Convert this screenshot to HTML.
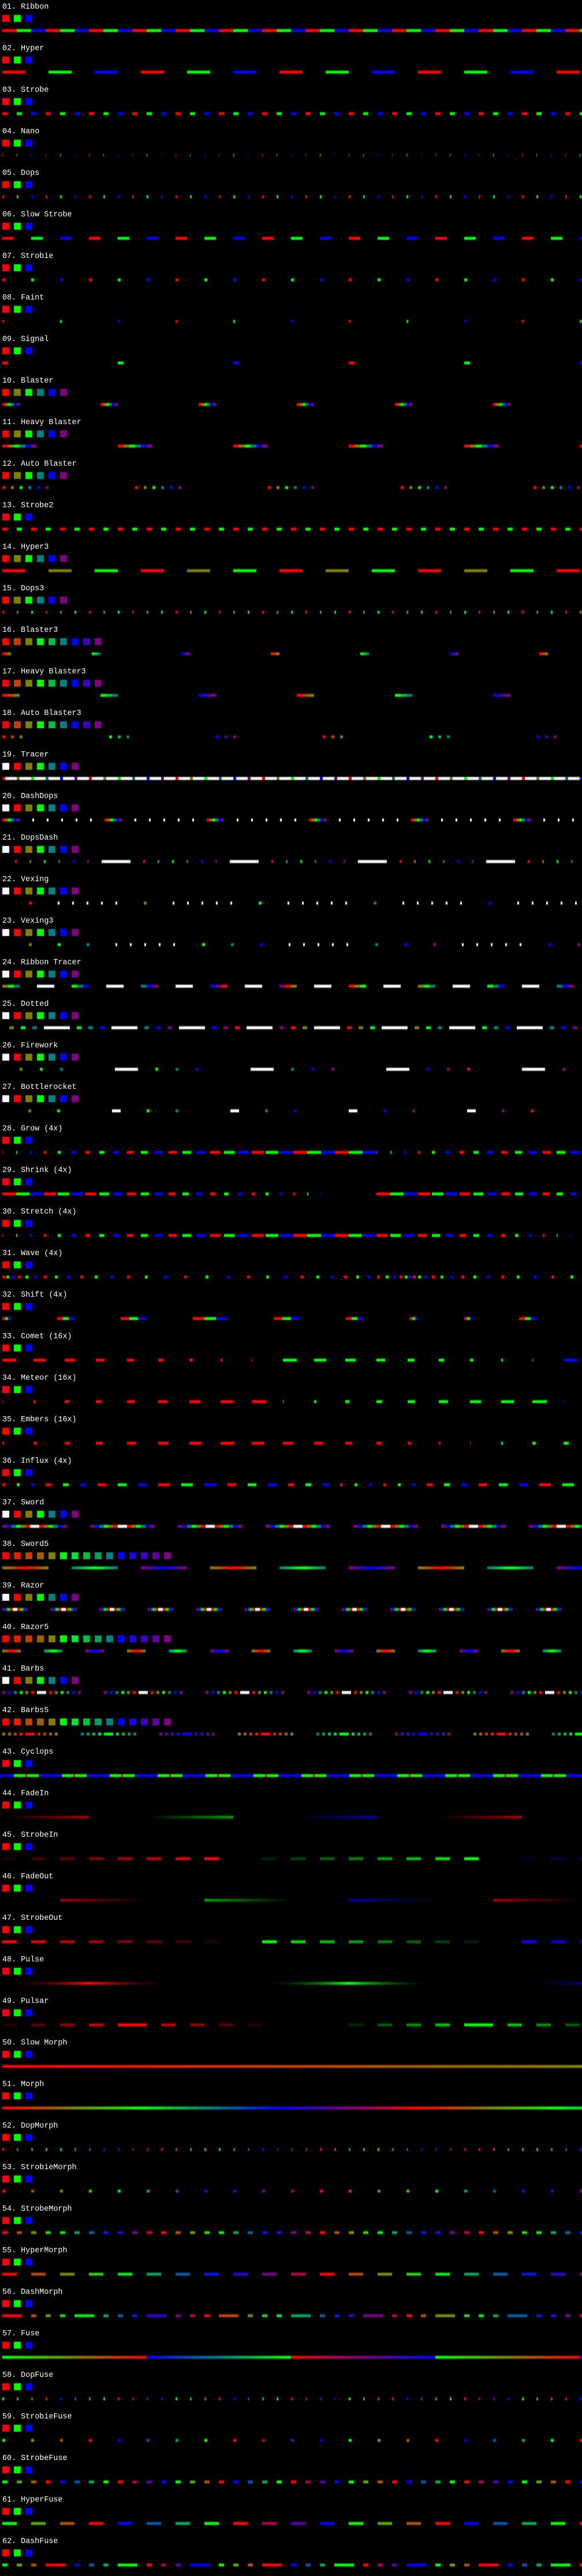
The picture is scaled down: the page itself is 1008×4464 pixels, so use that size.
<!DOCTYPE html>
<html><head><meta charset="utf-8">
<style>
html,body{margin:0;padding:0;background:#000;}
body{width:1008px;height:4464px;position:relative;overflow:hidden;}
canvas{position:absolute;left:0;top:0;}
.t{position:absolute;left:4px;font-family:"Liberation Mono",monospace;font-size:13.4px;line-height:16px;color:#fff;white-space:pre;}
</style></head><body>
<canvas id="c" width="1008" height="4464"></canvas>
<div class="t" style="top:5px">01. Ribbon</div>
<div class="t" style="top:77px">02. Hyper</div>
<div class="t" style="top:149px">03. Strobe</div>
<div class="t" style="top:221px">04. Nano</div>
<div class="t" style="top:293px">05. Dops</div>
<div class="t" style="top:365px">06. Slow Strobe</div>
<div class="t" style="top:437px">07. Strobie</div>
<div class="t" style="top:509px">08. Faint</div>
<div class="t" style="top:581px">09. Signal</div>
<div class="t" style="top:653px">10. Blaster</div>
<div class="t" style="top:725px">11. Heavy Blaster</div>
<div class="t" style="top:797px">12. Auto Blaster</div>
<div class="t" style="top:869px">13. Strobe2</div>
<div class="t" style="top:941px">14. Hyper3</div>
<div class="t" style="top:1013px">15. Dops3</div>
<div class="t" style="top:1085px">16. Blaster3</div>
<div class="t" style="top:1157px">17. Heavy Blaster3</div>
<div class="t" style="top:1229px">18. Auto Blaster3</div>
<div class="t" style="top:1301px">19. Tracer</div>
<div class="t" style="top:1373px">20. DashDops</div>
<div class="t" style="top:1445px">21. DopsDash</div>
<div class="t" style="top:1517px">22. Vexing</div>
<div class="t" style="top:1589px">23. Vexing3</div>
<div class="t" style="top:1661px">24. Ribbon Tracer</div>
<div class="t" style="top:1733px">25. Dotted</div>
<div class="t" style="top:1805px">26. Firework</div>
<div class="t" style="top:1877px">27. Bottlerocket</div>
<div class="t" style="top:1949px">28. Grow (4x)</div>
<div class="t" style="top:2021px">29. Shrink (4x)</div>
<div class="t" style="top:2093px">30. Stretch (4x)</div>
<div class="t" style="top:2165px">31. Wave (4x)</div>
<div class="t" style="top:2237px">32. Shift (4x)</div>
<div class="t" style="top:2309px">33. Comet (16x)</div>
<div class="t" style="top:2381px">34. Meteor (16x)</div>
<div class="t" style="top:2453px">35. Embers (16x)</div>
<div class="t" style="top:2525px">36. Influx (4x)</div>
<div class="t" style="top:2597px">37. Sword</div>
<div class="t" style="top:2669px">38. Sword5</div>
<div class="t" style="top:2741px">39. Razor</div>
<div class="t" style="top:2813px">40. Razor5</div>
<div class="t" style="top:2885px">41. Barbs</div>
<div class="t" style="top:2957px">42. Barbs5</div>
<div class="t" style="top:3029px">43. Cyclops</div>
<div class="t" style="top:3101px">44. FadeIn</div>
<div class="t" style="top:3173px">45. StrobeIn</div>
<div class="t" style="top:3245px">46. FadeOut</div>
<div class="t" style="top:3317px">47. StrobeOut</div>
<div class="t" style="top:3389px">48. Pulse</div>
<div class="t" style="top:3461px">49. Pulsar</div>
<div class="t" style="top:3533px">50. Slow Morph</div>
<div class="t" style="top:3605px">51. Morph</div>
<div class="t" style="top:3677px">52. DopMorph</div>
<div class="t" style="top:3749px">53. StrobieMorph</div>
<div class="t" style="top:3821px">54. StrobeMorph</div>
<div class="t" style="top:3893px">55. HyperMorph</div>
<div class="t" style="top:3965px">56. DashMorph</div>
<div class="t" style="top:4037px">57. Fuse</div>
<div class="t" style="top:4109px">58. DopFuse</div>
<div class="t" style="top:4181px">59. StrobieFuse</div>
<div class="t" style="top:4253px">60. StrobeFuse</div>
<div class="t" style="top:4325px">61. HyperFuse</div>
<div class="t" style="top:4397px">62. DashFuse</div>
<script>
(function(){
var ctx=document.getElementById('c').getContext('2d');
function h(s){return [parseInt(s.substr(1,2),16),parseInt(s.substr(3,2),16),parseInt(s.substr(5,2),16)];}
var R=h('#ff0000'),G=h('#00ff00'),B=h('#0000ff'),W=h('#ffffff');
var P3=[R,G,B];
var P6=['#ff0000','#808000','#00ff00','#008080','#0000ff','#800080'].map(h);
var P9=['#ff0000','#c04000','#808000','#00ff00','#00c040','#008080','#0000ff','#4000c0','#800080'].map(h);
var P15=['#ff0000','#e02000','#c04000','#a06000','#808000','#00ff00','#00e040','#00c040','#00a060','#008080','#0000ff','#2000e0','#4000c0','#6000a0','#800080'].map(h);
var WP6=[W].concat(P6);
var Y=0;
function rgba(c,b,a){return 'rgba('+Math.round(c[0]*b)+','+Math.round(c[1]*b)+','+Math.round(c[2]*b)+','+a+')';}
function S(x,w,c,b){if(b===undefined)b=1;if(w<=0||x>1008||x+w<0)return;
 ctx.fillStyle=rgba(c,b,1);ctx.fillRect(x,Y,w,4);
 ctx.fillStyle=rgba(c,b,0.45);ctx.fillRect(x,Y-1,w,1);ctx.fillRect(x,Y+4,w,1);
 ctx.fillStyle=rgba(c,b,0.15);ctx.fillRect(x,Y-2,w,1);ctx.fillRect(x,Y+5,w,1);}
function mix(a,b,t){return [a[0]+(b[0]-a[0])*t,a[1]+(b[1]-a[1])*t,a[2]+(b[2]-a[2])*t];}
function morph(u){u=((u%3)+3)%3;var i=Math.floor(u);return mix(P3[i],P3[(i+1)%3],u-i);}
function mstep(s){return morph((s%11)*3/11);}
var FP=[[G,R],[B,G],[R,B]];
function fstep(s){var p=Math.floor(s/4)%3;return mix(FP[p][0],FP[p][1],(s%4)/3);}
function blink(cols,on,off,grp,gap){var x=4,i=0;while(x<1010){S(x,on,cols[i%cols.length]);x+=on+off;i++;if(grp&&i%grp==0)x+=gap;}}
function sblink(fn,on,off){var x=4,s=0;while(x<1010){S(x,on,fn(s));x+=on+off;s++;}}
function seqGroups(build,gap){var x=4,k=0;while(x<1010){var g=build(k);for(var j=0;j<g.length;j++){S(x,g[j][1],g[j][0]);x+=g[j][1];}x+=gap;k++;}}
var gens=[
function(){blink(P3,25,0);},
function(){blink(P3,40,40);},
function(){blink(P3,9,16);},
function(){blink(P3,1,24);},
function(){blink(P3,3,22);},
function(){blink(P3,20,30);},
function(){blink(P3,5,45);},
function(){blink(P3,3,97);},
function(){blink(P3,10,190);},
function(){blink(P6,5,0,6,140);},
function(){blink(P6,10,0,6,140);},
function(){blink(P6,5,10,6,140);},
function(){blink([R,G],9,16);},
function(){blink(P6.slice(0,3),40,40);},
function(){blink(P6.slice(0,3),3,22);},
function(){blink(P9,5,0,3,140);},
function(){blink(P9,10,0,3,140);},
function(){blink(P9,5,10,3,140);},
// 19 Tracer
function(){var x=4,i=0;while(x<1010){S(x,5,P6[i%6]);S(x+5,20,W);x+=25;i++;}},
// 20 DashDops
function(){var x=4;while(x<1010){for(var j=0;j<6;j++){S(x,5,P6[j]);x+=5;}for(j=0;j<5;j++){x+=22;S(x,3,W);x+=3;}x+=22;}},
// 21 DopsDash
function(){var x=4;while(x<1010){for(var j=0;j<6;j++){x+=22;S(x,3,P6[j]);x+=3;}x+=22;S(x,50,W);x+=50;}},
// 22 Vexing
function(){var x=50,k=0;while(x<1010){S(x,5,P6[k%6]);x+=50;for(var j=0;j<5;j++){S(x,3,W);x+=25;}x+=24;k++;}},
// 23 Vexing3
function(){var x=50,k=0;while(x<1010){for(var j=0;j<3;j++){S(x,5,P6[(1+k+j)%6]);x+=50;}x-=50;x+=50;for(j=0;j<5;j++){S(x,3,W);x+=25;}x+=25;k++;}},
// 24 Ribbon Tracer
function(){var x=4,k=0;while(x<1010){for(var j=0;j<3;j++){S(x,10,P6[(1+k+j)%6]);x+=10;}x+=30;S(x,30,W);x+=60;k++;}},
// 25 Dotted
function(){var x=4,k=0;while(x<1010){for(var j=0;j<3;j++){x+=12;S(x,8,P6[(1+k+j)%6]);x+=8;}x+=12;S(x,45,W);x+=45;k++;}},
// 26 Firework
function(){var x=4,k=0;while(x<1010){for(var j=0;j<3;j++){x+=30;S(x,5,P6[(1+k+j)%6]);x+=5;}x+=90;S(x,40,W);x+=40;k++;}},
// 27 Bottlerocket
function(){var x=4,k=0;while(x<1010){for(var j=0;j<2;j++){x+=45;S(x,5,P6[(1+k+j)%6]);x+=5;}x+=90;S(x,15,W);x+=15;k++;}},
// 28 Grow
function(){for(var k=0;k<43;k++){var m=k%27;S(4+24*k,Math.min(24,1+m*1.1),P3[k%3]);}},
// 29 Shrink
function(){for(var k=0;k<43;k++){var m=k%27;var w=24-m;if(w>0)S(4+24*k,w,P3[k%3]);}},
// 30 Stretch
function(){for(var k=0;k<43;k++){var m=k%46,w;if(m<=21)w=1+1.1*m;else if(m<=24)w=24;else w=Math.max(1,24-(m-24)*1.4);S(4+24*k,w,P3[k%3]);}},
// 31 Wave
function(){var d=[];for(var v=7;v<=37;v+=2)d.push(v);for(v=37;v>=7;v-=2)d.push(v);var x=4,i=0;while(x<1010){S(x,5,P3[i%3]);x+=d[i%d.length];i++;}},
// 32 Shift
function(){var t=[5,10,15,20,15,10,5];var x=4,k=0;while(x<1010){var w=t[k%7];for(var j=0;j<3;j++){S(x,w,P3[j]);x+=w;}x+=80;k++;}},
// 33 Comet
function(){for(var k=0;k<19;k++){S(4+54*k,Math.max(1,24-3*(k%9)),P3[Math.floor(k/9)%3]);}},
// 34 Meteor
function(){for(var k=0;k<19;k++){S(4+54*k,1+3*(k%9),P3[Math.floor(k/9)%3]);}},
// 35 Embers
function(){for(var k=0;k<19;k++){var m=k%16;var w=m<8?3*(m+1):Math.max(1,24-3*(m-7));S(4+54*k,w,P3[Math.floor(k/16)%3]);}},
// 36 Influx
function(){var t=[5,10,15,20,15,10,5];var x=4,i=0;while(x<1010){var w=t[Math.floor(i/3)%7];S(x,w,P3[i%3]);x+=w+20;i++;}},
// 37 Sword
function(){seqGroups(function(){var g=[];[5,4,3,2,1,0].forEach(function(j){g.push([P6[j],8]);});g.push([W,16]);[0,1,2,3,4,5].forEach(function(j){g.push([P6[j],8]);});return g;},40);},
// 38 Sword5
function(){seqGroups(function(k){var c=5*(k%3),g=[];for(var j=4;j>=1;j--)g.push([P15[c+j],8]);g.push([P15[c],16]);for(j=1;j<=4;j++)g.push([P15[c+j],8]);return g;},40);},
// 39 Razor
function(){seqGroups(function(){var g=[];[5,4,3,2,1,0].forEach(function(j){g.push([P6[j],3]);});g.push([W,8]);[0,1,2,3,4,5].forEach(function(j){g.push([P6[j],3]);});return g;},40);},
// 40 Razor5
function(){seqGroups(function(k){var c=5*(k%3),g=[];for(var j=4;j>=1;j--)g.push([P15[c+j],3]);g.push([P15[c],8]);for(j=1;j<=4;j++)g.push([P15[c+j],3]);return g;},40);},
// 41 Barbs
function(){var x=4;while(x<1010){var j;for(j=5;j>=0;j--){S(x,5,P6[j]);x+=10;}S(x,16,W);x+=21;for(j=0;j<6;j++){S(x,5,P6[j]);x+=10;}x+=35;}},
// 42 Barbs5
function(){var x=4,k=0;while(x<1010){var c=5*(k%3),j;for(j=4;j>=1;j--){S(x,5,P15[c+j]);x+=10;}S(x,16,P15[c]);x+=21;for(j=1;j<=4;j++){S(x,5,P15[c+j]);x+=10;}x+=35;k++;}},
// 43 Cyclops
function(){var x=-16;while(x<1010){S(x,40,B);x+=40;S(x,20,G);x+=20;S(x,3,R);x+=3;S(x,20,G);x+=20;}},
// 44 FadeIn
function(){for(var k=0;k<5;k++){var x0=4+250*k;for(var p=0;p<150;p++)S(x0+p,1,P3[k%3],0.6*p/150);}},
// 45 StrobeIn
function(){for(var ci=0;ci<3;ci++)for(var k=0;k<9;k++)S(-46+450*ci+50*k,25,P3[ci],k/8);},
// 46 FadeOut
function(){for(var k=0;k<4;k++){var x0=104+250*k;for(var p=0;p<150;p++)S(x0+p,1,P3[k%3],0.6*(1-p/150));}},
// 47 StrobeOut
function(){for(var ci=0;ci<3;ci++)for(var k=0;k<9;k++)S(4+450*ci+50*k,25,P3[ci],(8-k)/8);},
// 48 Pulse
function(){for(var k=0;k<3;k++){var x0=4+450*k;for(var p=0;p<300;p++){var b=1-Math.abs(p-150)/150;S(x0+p,1,P3[k],b*b*0.9+b*0.1);}}},
// 49 Pulsar
function(){var br=[.15,.35,.55,.75];for(var ci=0;ci<2;ci++){var x0=4+600*ci;for(var j=0;j<4;j++)S(x0+50*j,25,P3[ci],br[j]);S(x0+200,50,P3[ci],1);for(j=0;j<4;j++)S(x0+275+50*j,25,P3[ci],br[3-j]);}},
// 50 Slow Morph
function(){for(var x=4;x<1008;x++)S(x,1,morph((x-4)/2000));},
// 51 Morph
function(){for(var x=4;x<1008;x++)S(x,1,morph((x-4)/240));},
function(){sblink(mstep,3,22);},
function(){sblink(mstep,5,45);},
function(){sblink(mstep,9,16);},
function(){sblink(mstep,25,25);},
// 56 DashMorph
function(){var x=4,s=0;while(x<1010){S(x,34,mstep(s++));x+=50;for(var j=0;j<3;j++){S(x,9,mstep(s++));x+=25;}}},
// 57 Fuse
function(){for(var x=4;x<1008;x++){var p=Math.floor((x-4)/250)%3,t=((x-4)%250)/250;S(x,1,mix(FP[p][0],FP[p][1],t));}},
function(){sblink(fstep,3,22);},
function(){sblink(fstep,5,45);},
function(){sblink(fstep,9,16);},
function(){sblink(fstep,25,25);},
// 62 DashFuse
function(){var x=4,s=0;while(x<1010){for(var j=0;j<3;j++){S(x,9,fstep(s++));x+=25;}S(x,34,fstep(s++));x+=50;}}
];
var sw=function(i){var n=i+1;
 if(n>=10&&n<=15&&n!=13)return P6;
 if(n>=16&&n<=18)return P9;
 if((n>=19&&n<=27)||n==37||n==39||n==41)return WP6;
 if(n==38||n==40||n==42)return P15;
 return P3;};
for(var i=0;i<62;i++){
 var top=72*i;var cols=sw(i);
 for(var j=0;j<cols.length;j++){ctx.fillStyle=rgba(cols[j],1,1);ctx.fillRect(4+20*j,top+26,12,12);}
 Y=top+51;
 try{gens[i]();}catch(e){}
}
})();
</script>
</body></html>
